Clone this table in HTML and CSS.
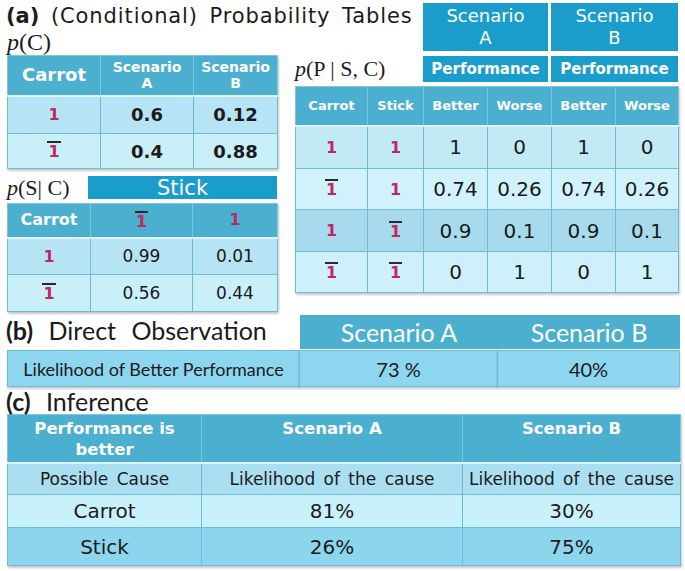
FILE: index.html
```html
<!DOCTYPE html>
<html>
<head>
<meta charset="utf-8">
<link rel="stylesheet" href="styles.css">
</head>
<body>
<div class="page">
  <section class="sec-a">
    <div class="col-left">
      <div class="title"><b>(a)</b> (Conditional) Probability Tables</div>
      <div class="math"><i>p</i>(C)</div>
      <table class="t pc">
        <colgroup><col class="w93"><col class="w93"><col class="w84"></colgroup>
        <tr class="hd h40"><th class="big">Carrot</th><th>Scenario<br>A</th><th>Scenario<br>B</th></tr>
        <tr class="r-a h38"><td><span class="one">1</span></td><td class="vb">0.6</td><td class="vb">0.12</td></tr>
        <tr class="r-b h35"><td><span class="one bar">1</span></td><td class="vb">0.4</td><td class="vb">0.88</td></tr>
      </table>
      <div class="srow">
        <div class="math sm"><i>p</i>(S| C)</div>
        <div class="box stick">Stick</div>
      </div>
      <table class="t ps">
        <colgroup><col class="w83"><col class="w102"><col class="w85"></colgroup>
        <tr class="hd h34"><th class="big2">Carrot</th><th><span class="one bar">1</span></th><th><span class="one">1</span></th></tr>
        <tr class="r-a h37"><td><span class="one">1</span></td><td class="vr">0.99</td><td class="vr">0.01</td></tr>
        <tr class="r-b h37"><td><span class="one bar">1</span></td><td class="vr">0.56</td><td class="vr">0.44</td></tr>
      </table>
    </div>
    <div class="col-right">
      <div class="boxrow top">
        <div class="spacer"></div>
        <div class="box sc w125">Scenario<br>A</div>
        <div class="box sc w127">Scenario<br>B</div>
      </div>
      <div class="boxrow perf">
        <div class="spacer math sm2"><i>p</i>(P | S, C)</div>
        <div class="box pf w125">Performance</div>
        <div class="box pf w127">Performance</div>
      </div>
      <table class="t pp">
        <colgroup><col class="w72"><col class="w56"><col class="w64"><col class="w64"><col class="w64"><col class="w63"></colgroup>
        <tr class="hd h39"><th>Carrot</th><th>Stick</th><th>Better</th><th>Worse</th><th>Better</th><th>Worse</th></tr>
        <tr class="p1 h43"><td><span class="one">1</span></td><td><span class="one">1</span></td><td class="vp">1</td><td class="vp">0</td><td class="vp">1</td><td class="vp">0</td></tr>
        <tr class="p2 h41"><td><span class="one bar">1</span></td><td><span class="one">1</span></td><td class="vp">0.74</td><td class="vp">0.26</td><td class="vp">0.74</td><td class="vp">0.26</td></tr>
        <tr class="p3 h42"><td><span class="one">1</span></td><td><span class="one bar">1</span></td><td class="vp">0.9</td><td class="vp">0.1</td><td class="vp">0.9</td><td class="vp">0.1</td></tr>
        <tr class="p4 h41"><td><span class="one bar">1</span></td><td><span class="one bar">1</span></td><td class="vp">0</td><td class="vp">1</td><td class="vp">0</td><td class="vp">1</td></tr>
      </table>
    </div>
  </section>

  <section class="sec-b">
    <div class="lbl"><b>(b)</b> Direct Observation</div>
    <div class="bh">Scenario A</div>
    <div class="bh">Scenario B</div>
    <div class="bd first">Likelihood of Better Performance</div>
    <div class="bd num">73 %</div>
    <div class="bd num">40%</div>
  </section>

  <div class="lbl lc"><b>(c)</b> Inference</div>
  <table class="t ct">
    <colgroup><col class="w194"><col class="w261"><col class="w218"></colgroup>
    <tr class="hd h48"><th>Performance is<br>better</th><th>Scenario A</th><th>Scenario B</th></tr>
    <tr class="c1 h32"><td class="cs">Possible Cause</td><td class="cs">Likelihood of the cause</td><td class="cs">Likelihood of the cause</td></tr>
    <tr class="c2 h33"><td class="cm">Carrot</td><td class="cm">81%</td><td class="cm">30%</td></tr>
    <tr class="c3 h38"><td class="cm">Stick</td><td class="cm">26%</td><td class="cm">75%</td></tr>
  </table>
</div>
</body>
</html>
```

FILE: styles.css
```css
html, body {
  margin: 0;
  padding: 0;
  background: #ffffff;
}
.page {
  width: 685px;
  height: 571px;
  box-sizing: border-box;
  padding: 3px 0 0 7px;
  font-family: "DejaVu Sans", Verdana, sans-serif;
  color: #1b1b1b;
  overflow: hidden;
}
.sec-a {
  display: flex;
  gap: 18px;
  align-items: flex-start;
}
.col-left {
  width: 270px;
  display: flex;
  flex-direction: column;
}
.col-right {
  width: 383px;
  display: flex;
  flex-direction: column;
}
.title {
  height: 27px;
  font-size: 21px;
  line-height: 27px;
  white-space: nowrap;
  letter-spacing: 0.9px;
  word-spacing: 4px;
  color: #1b1b1b;
  margin-left: -1px;
}
.title b { font-weight: bold; letter-spacing: 0; }
.math {
  font-family: "Liberation Serif", "Times New Roman", serif;
  font-size: 24px;
  height: 25px;
  line-height: 25px;
  color: #1b1b1b;
}
.math.sm { font-size: 22px; width: 81px; }
.math.sm2 { font-size: 22px; }

/* tables */
.t {
  border-collapse: collapse;
  table-layout: fixed;
  box-shadow: 1px 2px 2px rgba(0, 0, 0, 0.22);
}
.t th, .t td {
  padding: 0;
  text-align: center;
  vertical-align: middle;
  border: 1px solid #6cbcd7;
}
.t .hd th {
  background: #4bafd0;
  color: #ffffff;
  font-weight: bold;
  font-size: 14px;
  line-height: 16px;
  border-color: #7cc6de;
  border-bottom: 2px solid #dff4fb;
}
.pc { width: 270px; }
.ps { width: 270px; margin-top: 4px; }
.pp { width: 383px; margin-top: 4px; }
.ct { width: 673px; }

.w93 { width: 93px; }
.w84 { width: 84px; }
.w83 { width: 83px; }
.w102 { width: 102px; }
.w85 { width: 85px; }
.w72 { width: 72px; }
.w56 { width: 56px; }
.w64 { width: 64px; }
.w63 { width: 63px; }
.w194 { width: 194px; }
.w261 { width: 261px; }
.w218 { width: 218px; }

.h32 { height: 32px; }
.h33 { height: 33px; }
.h34 { height: 34px; }
.h35 { height: 35px; }
.h37 { height: 37px; }
.h38 { height: 38px; }
.h39 { height: 39px; }
.h40 { height: 40px; }
.h41 { height: 41px; }
.h42 { height: 42px; }
.h43 { height: 43px; }
.h48 { height: 48px; }

.pc .hd th.big { font-size: 18px; }
.ps .hd th.big2 { font-size: 16px; }

.r-a td { background: #b7e4f4; }
.r-b td { background: #c9eff9; }

.one {
  display: inline-block;
  color: #c0275e;
  font-weight: bold;
  font-size: 16px;
  line-height: 16px;
}
.one.bar {
  border-top: 2px solid #2a2a2a;
  padding: 1px 1px 0 1px;
  line-height: 15px;
}

.vb { font-size: 18px; font-weight: bold; color: #1a1a1a; }
.vr { font-size: 17px; color: #1a1a1a; }
.vp { font-size: 20px; color: #1a1a1a; }

.srow {
  display: flex;
  align-items: center;
  margin-top: 7px;
  height: 23px;
}
.box {
  background: #1b9dcb;
  color: #ffffff;
  display: flex;
  align-items: center;
  justify-content: center;
  text-align: center;
}
.stick {
  flex: 1;
  height: 23px;
  font-size: 21px;
}
.boxrow {
  display: flex;
  gap: 3px;
}
.boxrow .spacer { width: 125px; }
.w125 { width: 125px; }
.w127 { width: 127px; }
.boxrow.top { height: 48px; }
.sc {
  font-size: 18px;
  line-height: 22px;
}
.boxrow.perf {
  height: 26px;
  margin-top: 5px;
}
.pf {
  font-size: 15px;
  font-weight: bold;
}
.pp .hd th { font-size: 13px; }
.p1 td { background: #c2e9f6; }
.p2 td { background: #d1f2fb; }
.p3 td { background: #a6daec; }
.p4 td { background: #cdf0fa; }

/* section b */
.sec-b {
  display: grid;
  grid-template-columns: 293px 198px 182px;
  grid-template-rows: 34px 37px;
  row-gap: 1px;
  margin-top: 3px;
}
.lbl {
  font-family: Lato, "Open Sans", sans-serif;
  font-size: 25px;
  line-height: 30px;
  color: #1b1b1b;
  word-spacing: 9px;
  white-space: nowrap;
  margin-left: -1px;
}
.lbl b { font-weight: bold; word-spacing: 0; }
.bh {
  background: #4bafd0;
  color: #ffffff;
  font-family: Lato, "Open Sans", sans-serif;
  font-size: 25px;
  display: flex;
  align-items: center;
  justify-content: center;
}
.bd {
  background: #8cd6ef;
  border: 1px solid #6cbcd7;
  margin-left: -1px;
  font-family: Lato, "Open Sans", sans-serif;
  font-size: 20px;
  display: flex;
  align-items: center;
  justify-content: center;
  box-shadow: 0 2px 2px rgba(0, 0, 0, 0.2);
}
.bd.first {
  margin-left: 0;
  font-size: 18px;
}
.lc {
  height: 25px;
  line-height: 25px;
  margin-top: 2px;
}

/* section c */
.ct .hd th {
  font-size: 16.5px;
  line-height: 21px;
  vertical-align: top;
  padding-top: 3px;
}
.c1 td { background: #aadff1; }
.c2 td { background: #c9f1fb; }
.c3 td { background: #8dd5ed; }
.cs { font-size: 17px; word-spacing: 3px; }
.cm { font-size: 20px; }
```
